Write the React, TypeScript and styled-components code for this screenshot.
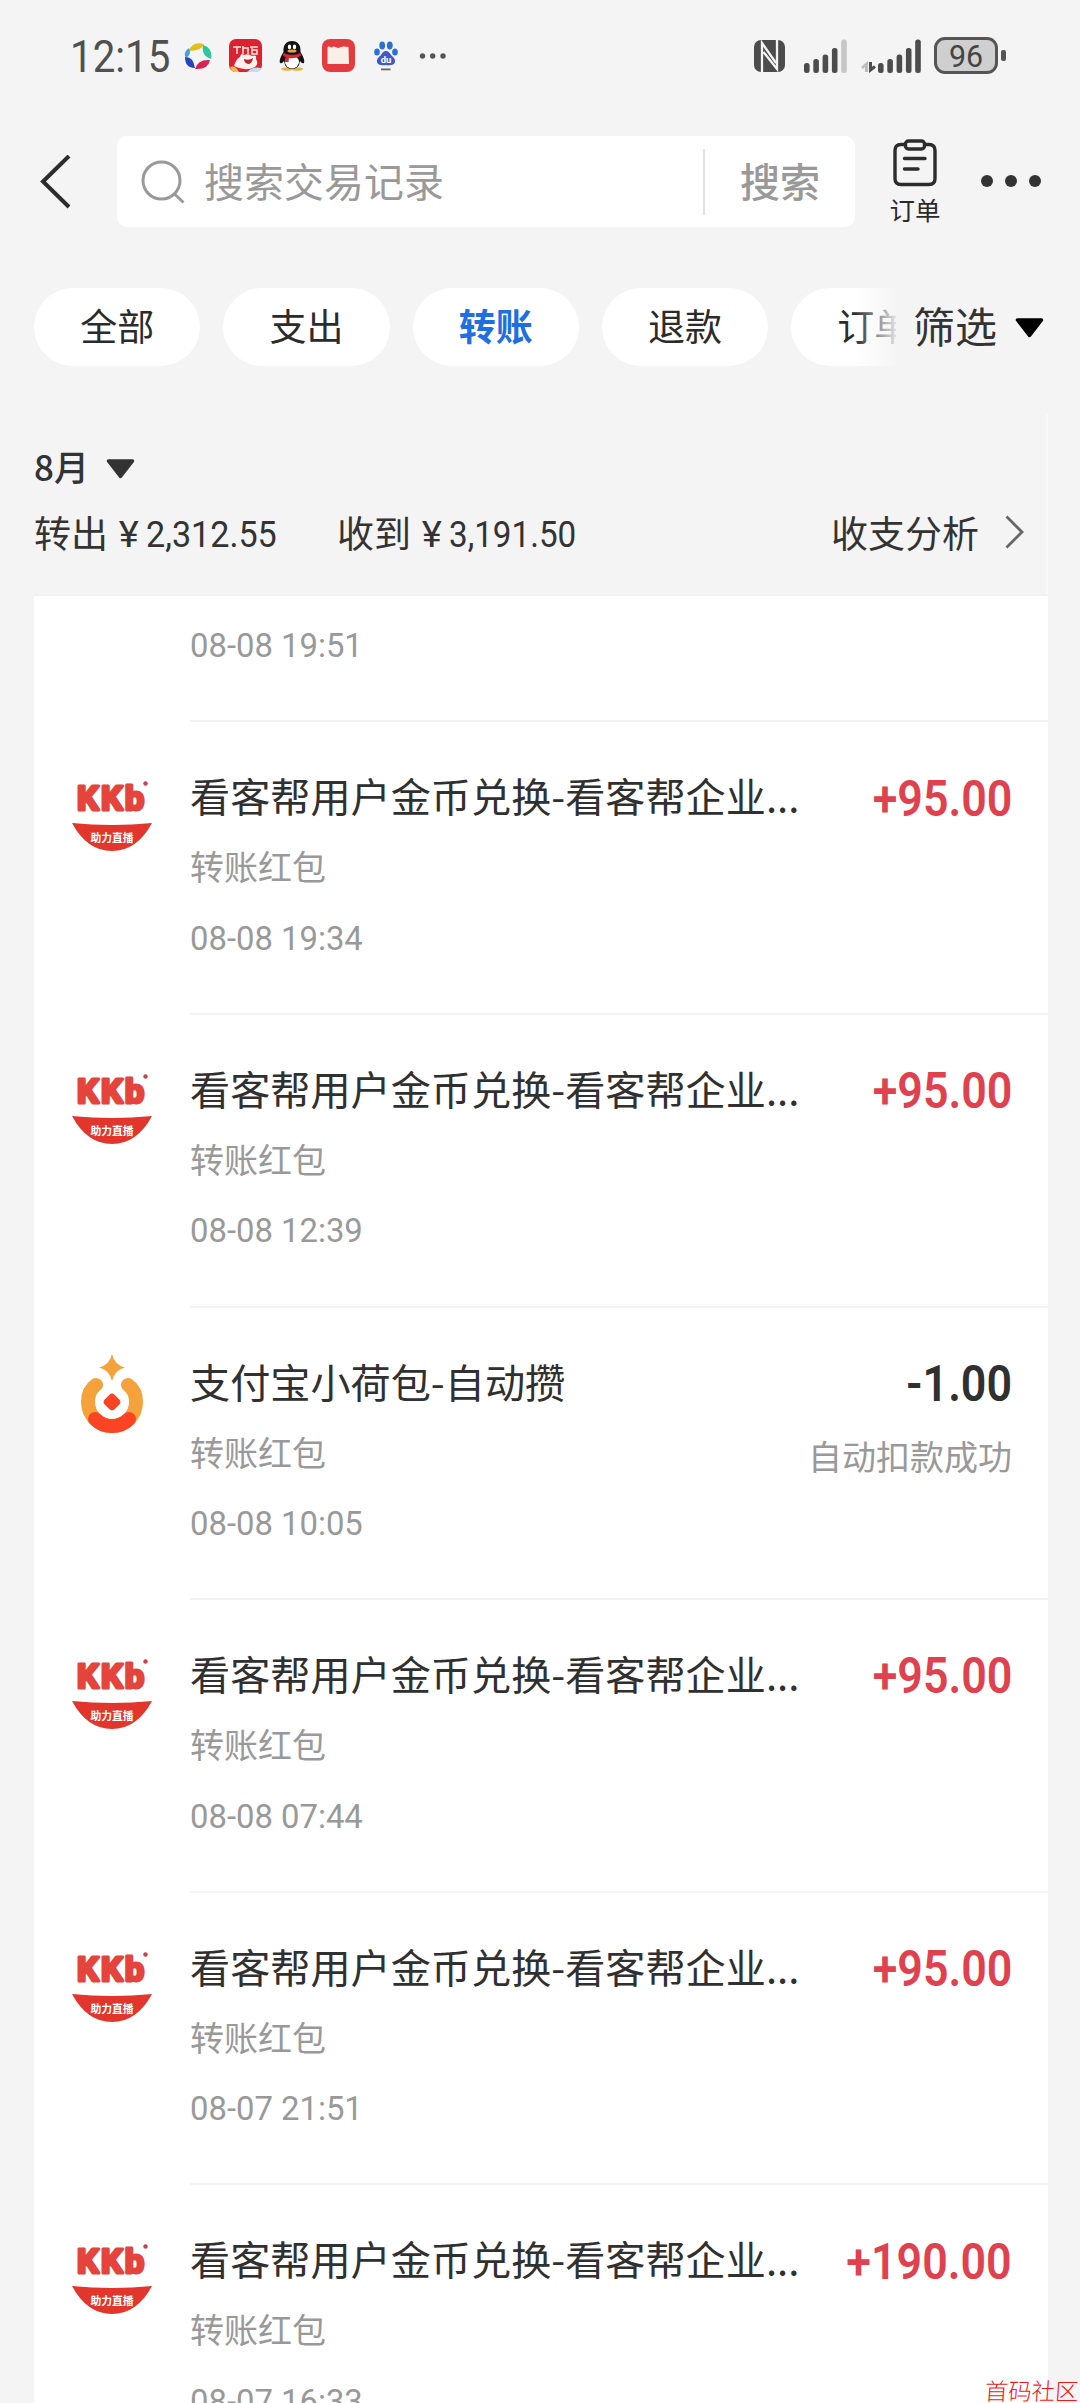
import React from "react";
import styled, { createGlobalStyle } from "styled-components";

const GlobalStyle = createGlobalStyle`
  * { box-sizing: border-box; }
  body { margin: 0; background: #f4f4f4; }
`;

const cjk = `"Noto Sans CJK SC", sans-serif`;
const latin = `Roboto, "Noto Sans CJK SC", sans-serif`;

const Screen = styled.main`
  position: relative;
  width: 1080px;
  height: 2403px;
  overflow: hidden;
  background: #f4f4f4;
  color: #333;
  font-family: ${cjk};
`;

/* Narrow numerals: a horizontally condensed run of text */
const Figures = styled.span<{ size: number; squeeze: number; weight?: number; origin?: string }>`
  display: inline-block;
  font-family: ${latin};
  font-size: ${(p) => p.size}px;
  font-weight: ${(p) => p.weight ?? 400};
  line-height: 1;
  white-space: pre;
  transform: scaleX(${(p) => p.squeeze});
  transform-origin: ${(p) => p.origin ?? "left"} center;
`;

/* ---------- status bar ---------- */
const StatusBar = styled.header`
  display: flex;
  align-items: center;
  height: 111px;
  padding: 0 74px 0 70px;
  color: #505050;
`;
const Clock = styled.div`
  width: 114px;
  height: 46px;
  padding-top: 2px;
  display: flex;
  align-items: center;
`;
const AppIcons = styled.div`
  display: flex;
  align-items: center;
  flex: 1;
`;
const StatusIcon = styled.svg<{ gap?: number }>`
  display: block;
  flex: none;
  margin-left: ${(p) => p.gap ?? 0}px;
`;
const Battery = styled.div`
  display: flex;
  align-items: center;
  gap: 3px;
  margin-left: 12px;
`;
const BatteryBody = styled.div`
  width: 64px;
  height: 37px;
  border: 3px solid #555;
  border-radius: 11px;
  background: #cfcfcf;
  display: flex;
  align-items: center;
  justify-content: center;
  color: #444;
`;
const BatteryTip = styled.div`
  width: 5px;
  height: 11px;
  border-radius: 2px;
  background: #555;
`;

/* ---------- navigation ---------- */
const NavBar = styled.nav`
  display: flex;
  align-items: center;
  height: 91px;
  margin-top: 25px;
  padding-left: 37px;
`;
const SearchBox = styled.div`
  display: flex;
  align-items: center;
  width: 738px;
  height: 91px;
  margin-left: 46px;
  padding-left: 23px;
  border-radius: 10px;
  background: #fff;
`;
const Placeholder = styled.span`
  flex: 1;
  margin-left: 18px;
  color: #999;
  font-size: 40px;
  line-height: 60px;
  padding-bottom: 4px;
`;
const SearchDivider = styled.i`
  width: 2px;
  height: 66px;
  background: #e2e2e2;
`;
const SearchButton = styled.span`
  width: 150px;
  text-align: center;
  color: #999;
  font-size: 40px;
  font-weight: 500;
  line-height: 60px;
  padding-bottom: 4px;
`;
const Orders = styled.div`
  display: flex;
  flex-direction: column;
  align-items: center;
  width: 60px;
  margin-left: 30px;
  padding-top: 2px;
`;
const OrdersLabel = styled.span`
  margin-top: 4px;
  font-size: 25.5px;
  line-height: 36px;
  color: #2a2a2a;
`;
const MoreDots = styled.div`
  display: flex;
  gap: 12.2px;
  margin-left: 36px;
  padding-bottom: 2px;
`;
const Dot = styled.i`
  width: 12px;
  height: 12px;
  border-radius: 50%;
  background: #333;
`;

/* ---------- filter chips ---------- */
const FilterBar = styled.div`
  display: flex;
  align-items: center;
  height: 78px;
  margin-top: 61px;
  padding-left: 34px;
`;
const ChipStrip = styled.div`
  position: relative;
  display: flex;
  gap: 23px;
  width: 862px;
  overflow: hidden;
  &::after {
    content: "";
    position: absolute;
    inset: 0 0 0 auto;
    width: 42px;
    background: linear-gradient(to right, rgba(244, 244, 244, 0), rgba(244, 244, 244, 0.9));
  }
`;
const Chip = styled.div<{ active?: boolean }>`
  flex: none;
  width: 166.3px;
  height: 78px;
  border-radius: 39px;
  background: #fff;
  text-align: center;
  font-size: 37px;
  line-height: 74px;
  font-weight: ${(p) => (p.active ? 700 : 400)};
  color: ${(p) => (p.active ? "#1f6fe0" : "#2b2b2b")};
`;
const FilterButton = styled.div`
  display: flex;
  align-items: center;
  gap: 18px;
  margin-left: 17px;
  font-size: 42px;
  line-height: 74px;
  padding-bottom: 4px;
`;
const CaretBox = styled.span`
  display: flex;
  padding-top: 6px;
`;

/* ---------- month summary ---------- */
const Summary = styled.section`
  width: 1014px;
  height: 180px;
  margin: 48px 0 0 34px;
  padding-top: 27px;
  border-right: 2px solid #f9f9f9;
`;
const MonthRow = styled.div`
  display: flex;
  align-items: center;
  gap: 17px;
  height: 50px;
  font-size: 35px;
  font-weight: 500;
  line-height: 50px;
`;
const TotalsRow = styled.div`
  display: flex;
  align-items: center;
  height: 50px;
  margin-top: 16px;
  font-size: 37px;
  line-height: 50px;
`;
const Total = styled.div<{ width: number }>`
  display: flex;
  align-items: center;
  width: ${(p) => p.width}px;
  white-space: nowrap;
`;
const TotalValue = styled.span`
  display: flex;
  padding-top: 6px;
  margin-left: 3px;
`;
const Yen = styled.span`
  width: 35px;
  height: 37px;
  display: flex;
  justify-content: center;
`;
const Analysis = styled.div`
  display: flex;
  align-items: center;
  gap: 26px;
  margin-left: auto;
  margin-right: 21px;
`;

/* ---------- records ---------- */
const Card = styled.section`
  width: 1014px;
  height: 1820px;
  margin-left: 34px;
  border-top: 2px solid #f1f1f1;
  background: #fff;
`;
const Peek = styled.div`
  height: 124.4px;
  padding: 33px 0 0 156px;
  color: #999;
`;
const Record = styled.article`
  display: flex;
  height: 292.6px;
`;
const LogoCell = styled.div`
  width: 156px;
  padding: 48px 0 0 34px;
`;
const Body = styled.div`
  flex: 1;
  display: flex;
  justify-content: space-between;
  padding: 45px 36px 0 0;
  border-top: 2px solid #f3f3f3;
`;
const Texts = styled.div`
  display: flex;
  flex-direction: column;
`;
const Title = styled.span`
  font-size: 40.15px;
  line-height: 56px;
  white-space: nowrap;
  color: #303030;
`;
const Kind = styled.span`
  margin-top: 15px;
  font-size: 34px;
  line-height: 56px;
  color: #999;
`;
const When = styled.span`
  margin-top: 16px;
  height: 56px;
  display: flex;
  align-items: center;
  color: #999;
`;
const Side = styled.div`
  display: flex;
  flex-direction: column;
  align-items: flex-end;
`;
const Amount = styled.span<{ income: boolean }>`
  height: 60px;
  margin-top: 2px;
  display: flex;
  align-items: center;
  color: ${(p) => (p.income ? "#e0414f" : "#303030")};
`;
const Note = styled.span`
  margin-top: 13px;
  font-size: 34px;
  line-height: 56px;
  color: #999;
`;

const Watermark = styled.span`
  position: absolute;
  right: 1px;
  bottom: 0;
  font-size: 23.4px;
  font-weight: 300;
  line-height: 25px;
  color: #f01818;
  transform: skewX(-4deg);
`;

/* ---------- drawings ---------- */
const Caret = ({ color }: { color: string }) => (
  <CaretBox>
    <svg width="29" height="20" viewBox="0 0 29 20">
      <path d="M2.5 2 H26.5 L14.5 17.5 Z" fill={color} stroke={color} strokeWidth="3.5" strokeLinejoin="round" />
    </svg>
  </CaretBox>
);

const PinwheelIcon = () => (
  <StatusIcon width="28" height="28" viewBox="0 0 28 28">
    <path d="M5 9 Q8 -1 20 2 Q18 9 5 9Z" fill="#e2c01c" />
    <path d="M19 3 Q29 6 27 17 Q17 14 19 3Z" fill="#2fc79a" />
    <path d="M26 18 Q24 28 11 27 Q14 17 26 18Z" fill="#d8224f" />
    <path d="M11 26 Q1 26 1 15 Q9 14 11 26Z" fill="#2444c0" />
    <path d="M1 14 Q0 9 5 6 Q8 12 2 16Z" fill="#3fa0e8" />
  </StatusIcon>
);

const ShopIcon = () => (
  <StatusIcon gap={17} width="33" height="33" viewBox="0 0 33 33">
    <rect width="33" height="33" rx="7" fill="#dc2230" />
    <path d="M4 8 H12 M8 8 V15 M14 7 V15 M14 9 H19 V15 M21 8 H29 M23 9 V15 H28 V11 H24" stroke="#ffe9dc" strokeWidth="1.5" fill="none" />
    <path d="M5 27 Q7 20 11 18 Q12 13 15 16 Q20 14 23 17 Q28 15 27 20 Q30 25 26 28 Q16 33 5 27Z" fill="#fff1ee" />
    <path d="M15 20 Q20 22 24 19 Q23 25 19 25 Q15 24 15 20Z" fill="#b32833" />
    <path d="M1 28 Q6 26 10 33 H6 Q2 32 1 28Z" fill="#f4c33d" />
    <path d="M18 33 Q24 27 32 29 Q31 33 27 33Z" fill="#bfe0f3" />
  </StatusIcon>
);

const PenguinIcon = () => (
  <StatusIcon gap={17} width="26" height="31" viewBox="0 0 26 31">
    <ellipse cx="8" cy="29" rx="6" ry="1.8" fill="#e8b24a" />
    <ellipse cx="18" cy="29" rx="6" ry="1.8" fill="#e8b24a" />
    <path d="M13 1 C19 1 22 5 21.500 12 C24 16 26 20 25 23 Q23 24 21 21 Q20 29 13 29 Q6 29 5 21 Q3 24 1 23 C0 20 2 16 4.500 12 C4 5 7 1 13 1Z" fill="#141414" />
    <ellipse cx="13" cy="22" rx="7" ry="6.500" fill="#fff" />
    <ellipse cx="10.500" cy="7" rx="1.700" ry="2.400" fill="#fff" />
    <ellipse cx="15.500" cy="7" rx="1.700" ry="2.400" fill="#fff" />
    <ellipse cx="13" cy="11" rx="4.500" ry="1.500" fill="#f0a33a" />
    <path d="M4.500 13 Q13 17 21.500 13 L22 16 Q15 19 10 18 L9.500 22 L6 22 L6.500 17 L4 16Z" fill="#dd2433" />
  </StatusIcon>
);

const EnvelopeIcon = () => (
  <StatusIcon gap={17} width="33" height="33" viewBox="0 0 33 33">
    <rect width="33" height="33" rx="8" fill="#e23c40" />
    <path d="M5.500 8 Q7 7 9 8.500 L12 7.500 L16 9 L21 7.500 L26.500 8 L27 25 H5.500 Z" fill="#fbeee6" />
  </StatusIcon>
);

const PawIcon = () => (
  <StatusIcon gap={19} width="24" height="30" viewBox="0 0 24 30">
    <g fill="#2d6fd2">
      <ellipse cx="8.200" cy="4.500" rx="2.900" ry="4" />
      <ellipse cx="15.800" cy="4.500" rx="2.900" ry="4" />
      <ellipse cx="3" cy="11" rx="2.800" ry="3.600" />
      <ellipse cx="21" cy="11" rx="2.800" ry="3.600" />
      <path d="M12 10 Q15 10 17 14 Q22 18 21 21 Q20 25 12 24 Q4 25 3 21 Q2 18 7 14 Q9 10 12 10Z" fill="#4457c8" />
    </g>
    <text x="12" y="21.500" textAnchor="middle" fontFamily="Roboto, sans-serif" fontWeight="700" fontSize="9.500" fill="#fff">du</text>
    <rect x="7" y="27.500" width="9.500" height="1.800" fill="#666" />
  </StatusIcon>
);

const EllipsisIcon = () => (
  <StatusIcon gap={21} width="28" height="6" viewBox="0 0 28 6" fill="#555">
    <circle cx="3.500" cy="3" r="2.700" />
    <circle cx="13.700" cy="3" r="2.700" />
    <circle cx="24" cy="3" r="2.700" />
  </StatusIcon>
);

const NfcIcon = () => (
  <StatusIcon width="31" height="32" viewBox="0 0 31 32">
    <rect width="31" height="32" rx="7" fill="#4c4c4c" />
    <path d="M8 32 V3 L22 23 M9.500 12 L23 29 V0" stroke="#f4f4f4" strokeWidth="2.300" fill="none" />
  </StatusIcon>
);

const BARS = [10, 14, 18.5, 25, 33.5];
const SignalIcon = ({ gap, weak, traffic }: { gap: number; weak?: boolean; traffic?: boolean }) => {
  const left = traffic ? 17 : 0;
  return (
    <StatusIcon gap={gap} width={44 + left} height="34" viewBox={`0 0 ${44 + left} 34`}>
      {traffic && (
        <g strokeWidth="3" fill="none">
          <path d="M5.500 33 V25 L1 29" stroke="#bdbdbd" />
          <path d="M9.500 23 V31 L14 27.500" stroke="#4c4c4c" />
        </g>
      )}
      {BARS.map((h, i) => (
        <rect key={i} x={left + i * 9.3} y={34 - h} width="5.600" height={h} rx="2.500" fill={weak && i === 4 ? "#c6c6c6" : "#4c4c4c"} />
      ))}
    </StatusIcon>
  );
};

const BackIcon = () => (
  <svg width="34" height="54" viewBox="0 0 34 54">
    <path d="M32 1 L6 26.500 L32 52" fill="none" stroke="#2c2c2c" strokeWidth="4" />
  </svg>
);

const SearchIcon = () => (
  <svg width="46" height="46" viewBox="0 0 46 46" fill="none" stroke="#999" strokeWidth="3">
    <circle cx="21.500" cy="21.500" r="18.500" />
    <path d="M34.500 35 L43.500 43.500" />
  </svg>
);

const OrdersIcon = () => (
  <svg width="44" height="48" viewBox="0 0 44 48" fill="none" stroke="#2c2c2c" strokeWidth="3.400" strokeLinecap="round">
    <path d="M12 5.500 H8 Q2 5.500 2 11.500 V39.500 Q2 45.500 8 45.500 H36 Q42 45.500 42 39.500 V11.500 Q42 5.500 36 5.500 H32" />
    <rect x="12.500" y="2" width="19" height="8" rx="3" />
    <path d="M11.500 19.500 H32 M11.500 30 H25" />
  </svg>
);

const ChevronIcon = () => (
  <svg width="20" height="34" viewBox="0 0 20 34">
    <path d="M1.500 1.500 L17 17 L1.500 32.500" fill="none" stroke="#666" strokeWidth="2.800" />
  </svg>
);

const KkbLogo = () => (
  <svg width="90" height="90" viewBox="0 0 90 90">
    <text x="9 33 57" y="42" fontFamily="Roboto, sans-serif" fontWeight="700" fontSize="34" fill="#e5443c" stroke="#e5443c" strokeWidth="3.200" strokeLinejoin="round">KKb</text>
    <circle cx="77.500" cy="15.500" r="2.200" fill="#c9414a" />
    <path d="M4 55 Q44 59 84 55 Q69 83 44 83 Q19 83 4 55Z" fill="#e2362d" />
    <text x="44" y="74" textAnchor="middle" fontFamily={`"Noto Sans CJK SC", sans-serif`} fontWeight="700" fontSize="10.800" fill="#fff">助力直播</text>
  </svg>
);

const PouchLogo = () => (
  <svg width="90" height="90" viewBox="0 0 90 90">
    <path d="M28 31 C22 35 20 42 20 48 A24 24 0 0 0 68 48 C68 42 66 35 60 31" fill="none" stroke="#f6a23c" strokeWidth="14" strokeLinecap="round" />
    <path d="M27 65 A24 24 0 0 0 61 65" fill="none" stroke="#fa4423" strokeWidth="14" strokeLinecap="round" />
    <circle cx="44" cy="48" r="16.500" fill="#fff" />
    <rect x="37" y="41" width="14" height="14" rx="4" fill="#fa4423" transform="rotate(45 44 48)" />
    <path d="M44 0 Q46.500 11 57 13.500 Q46.500 16 44 27 Q41.500 16 31 13.500 Q41.500 11 44 0Z" fill="#f6a23c" stroke="#fff" strokeWidth="6" strokeLinejoin="round" paintOrder="stroke" />
  </svg>
);

/* ---------- data ---------- */
type Entry = { title: string; when: string; amount: string; note?: string; logo: "kkb" | "pouch" };
const KKB_TITLE = "看客帮用户金币兑换-看客帮企业...";
const entries: Entry[] = [
  { title: KKB_TITLE, when: "08-08 19:34", amount: "+95.00", logo: "kkb" },
  { title: KKB_TITLE, when: "08-08 12:39", amount: "+95.00", logo: "kkb" },
  { title: "支付宝小荷包-自动攒", when: "08-08 10:05", amount: "-1.00", note: "自动扣款成功", logo: "pouch" },
  { title: KKB_TITLE, when: "08-08 07:44", amount: "+95.00", logo: "kkb" },
  { title: KKB_TITLE, when: "08-07 21:51", amount: "+95.00", logo: "kkb" },
  { title: KKB_TITLE, when: "08-07 16:33", amount: "+190.00", logo: "kkb" },
];
const chips = ["全部", "支出", "转账", "退款", "订单"];

const DateText = ({ value }: { value: string }) => (
  <Figures size={33} squeeze={0.995}>{value}</Figures>
);

type TotalProps = { label: string; value: string; width: number; squeeze: number };
const TotalItem = ({ label, value, width, squeeze }: TotalProps) => (
  <Total width={width}>
    {label}
    <TotalValue>
      <Yen><Figures size={37.5} squeeze={1.02} origin="center">¥</Figures></Yen>
      <Figures size={37.5} squeeze={squeeze}>{value}</Figures>
    </TotalValue>
  </Total>
);

export default function App() {
  return (
    <Screen>
      <GlobalStyle />
      <StatusBar>
        <Clock><Figures size={44} squeeze={0.915}>12:15</Figures></Clock>
        <AppIcons>
          <PinwheelIcon />
          <ShopIcon />
          <PenguinIcon />
          <EnvelopeIcon />
          <PawIcon />
          <EllipsisIcon />
        </AppIcons>
        <NfcIcon />
        <SignalIcon gap={19} weak />
        <SignalIcon gap={13} traffic />
        <Battery>
          <BatteryBody><Figures size={32} squeeze={0.95} origin="center">96</Figures></BatteryBody>
          <BatteryTip />
        </Battery>
      </StatusBar>

      <NavBar>
        <BackIcon />
        <SearchBox>
          <SearchIcon />
          <Placeholder>搜索交易记录</Placeholder>
          <SearchDivider />
          <SearchButton>搜索</SearchButton>
        </SearchBox>
        <Orders>
          <OrdersIcon />
          <OrdersLabel>订单</OrdersLabel>
        </Orders>
        <MoreDots><Dot /><Dot /><Dot /></MoreDots>
      </NavBar>

      <FilterBar>
        <ChipStrip>
          {chips.map((label) => (
            <Chip key={label} active={label === "转账"}>{label}</Chip>
          ))}
        </ChipStrip>
        <FilterButton>筛选<Caret color="#000" /></FilterButton>
      </FilterBar>

      <Summary>
        <MonthRow>8月<Caret color="#333" /></MonthRow>
        <TotalsRow>
          <TotalItem label="转出" value="2,312.55" width={303} squeeze={0.91} />
          <TotalItem label="收到" value="3,191.50" width={300} squeeze={0.885} />
          <Analysis>收支分析<ChevronIcon /></Analysis>
        </TotalsRow>
      </Summary>

      <Card>
        <Peek><DateText value="08-08 19:51" /></Peek>
        {entries.map((e) => (
          <Record key={e.when}>
            <LogoCell>{e.logo === "kkb" ? <KkbLogo /> : <PouchLogo />}</LogoCell>
            <Body>
              <Texts>
                <Title>{e.title}</Title>
                <Kind>转账红包</Kind>
                <When><DateText value={e.when} /></When>
              </Texts>
              <Side>
                <Amount income={e.amount.startsWith("+")}>
                  <Figures size={49.5} squeeze={0.905} weight={600} origin="right">{e.amount}</Figures>
                </Amount>
                {e.note && <Note>{e.note}</Note>}
              </Side>
            </Body>
          </Record>
        ))}
      </Card>
      <Watermark>首码社区</Watermark>
    </Screen>
  );
}
